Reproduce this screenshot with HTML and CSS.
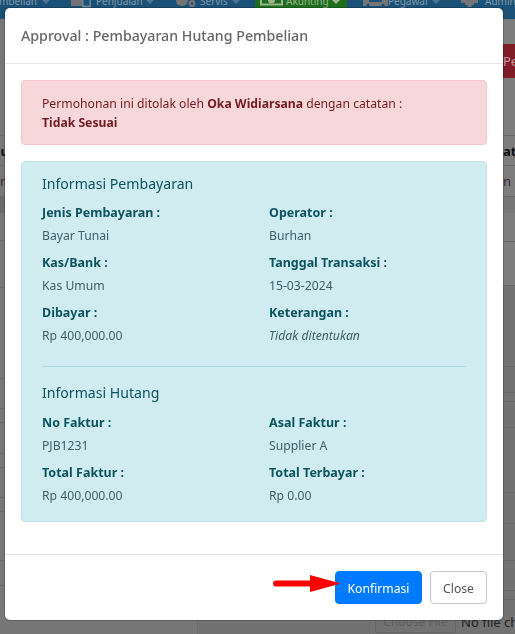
FILE: index.html
```html
<!DOCTYPE html>
<html lang="id">
<head>
<meta charset="utf-8">
<title>Approval</title>
<link rel="stylesheet" href="styles.css">
</head>
<body>
<div class="page">
  <nav class="nav">
    <span class="nav-text w-first">Pembelian</span><span class="caret"></span>
    <svg class="nav-ico i1" width="20" height="19" viewBox="0 0 20 19"><rect width="11" height="6" fill="#737373"/><path d="M11 0h9v7.500h-9z" fill="#6f8699"/><rect x="12.500" y="0" width="6" height="5.500" fill="#1b5177"/></svg>
    <span class="nav-text w45">Penjualan</span><span class="caret"></span>
    <svg class="nav-ico i2" width="22" height="19" viewBox="0 0 22 19"><circle cx="6" cy="0" r="6" fill="#757575"/><circle cx="2" cy="3" r="1.500" fill="#757575"/><circle cx="16" cy="3.500" r="3.500" fill="#757575"/><circle cx="16" cy="3.500" r="1.300" fill="#1b5177"/></svg>
    <span class="nav-text w27">Servis</span><span class="caret"></span>
    <span class="nav-green">
      <svg class="nav-ico" width="23" height="19" viewBox="0 0 23 19"><rect width="23" height="5.500" fill="#9db38f"/><rect x="2" width="19" height="3.500" fill="#1c6e1d"/><circle cx="11.500" cy="0" r="3.500" fill="#9db38f"/></svg>
      <span class="nav-text green-text w41">Akunting</span><span class="caret"></span>
    </span>
    <svg class="nav-ico i3" width="25" height="19" viewBox="0 0 25 19"><rect x="0" width="25" height="6" fill="#757575"/><rect x="6" width="13" height="2" fill="#1b5177"/><circle cx="5" cy="5" r="1.500" fill="#1b5177"/><circle cx="20" cy="5" r="1.500" fill="#1b5177"/></svg>
    <span class="nav-text w39">Pegawai</span><span class="caret"></span>
    <svg class="nav-ico i4" width="17" height="19" viewBox="0 0 17 19"><circle cx="8.500" cy="0" r="6" fill="#757575"/><rect x="6.500" y="0" width="4" height="7" fill="#757575"/><rect x="0" y="0" width="3" height="3" fill="#757575"/><rect x="14" y="0" width="3" height="3" fill="#757575"/></svg>
    <span class="nav-text">Admin</span>
  </nav>
  <div class="backdrop-body">
    <div class="strip strip-left">
      <div class="row r117"></div>
      <div class="row r30 head">Nu</div>
      <div class="row r31 sub">n</div>
      <div class="row r44 band"></div>
      <div class="row r47"></div>
      <div class="row r91"></div>
      <div class="row r30"></div>
      <div class="row r14"></div>
      <div class="row r31"></div>
      <div class="row r14"></div>
      <div class="row r30"></div>
      <div class="row r14"></div>
      <div class="row r49"></div>
      <div class="row r25"></div>
    </div>
    <div class="strip-mid"></div>
    <div class="strip-right">
      <div class="red-btn">Pe</div>
      <div class="row r58"></div>
      <div class="row r30 head">ato</div>
      <div class="row r31 sub">n</div>
      <div class="row r45 band-soft"></div>
      <div class="row r44"></div>
      <div class="row r81 dim"></div>
      <div class="row r26 dim"></div>
      <div class="row r9 dim"></div>
      <div class="row r26 dim"></div>
      <div class="row r65 dim"></div>
      <div class="row r31 dim"></div>
      <div class="row r37 dim"></div>
      <div class="row r30 dim"></div>
      <div class="row r9 dim"></div>
      <div class="file-row">
        <span class="file-btn">Choose File</span>
        <span class="file-text">No file chosen</span>
      </div>
    </div>
  </div>
</div>

<section class="modal">
  <header class="modal-header">
    <h5 class="modal-title">Approval : Pembayaran Hutang Pembelian</h5>
  </header>
  <div class="modal-body">
    <div class="alert">
      <p>Permohonan ini ditolak oleh <b>Oka Widiarsana</b> dengan catatan :</p>
      <p><b>Tidak Sesuai</b></p>
    </div>
    <div class="info">
      <h6 class="info-title">Informasi Pembayaran</h6>
      <div class="grid">
        <div class="field"><b>Jenis Pembayaran :</b><span>Bayar Tunai</span></div>
        <div class="field"><b>Operator :</b><span>Burhan</span></div>
        <div class="field"><b>Kas/Bank :</b><span>Kas Umum</span></div>
        <div class="field"><b>Tanggal Transaksi :</b><span>15-03-2024</span></div>
        <div class="field"><b>Dibayar :</b><span>Rp 400,000.00</span></div>
        <div class="field"><b>Keterangan :</b><span><i>Tidak ditentukan</i></span></div>
      </div>
      <hr class="rule">
      <h6 class="info-title">Informasi Hutang</h6>
      <div class="grid">
        <div class="field"><b>No Faktur :</b><span>PJB1231</span></div>
        <div class="field"><b>Asal Faktur :</b><span>Supplier A</span></div>
        <div class="field"><b>Total Faktur :</b><span>Rp 400,000.00</span></div>
        <div class="field"><b>Total Terbayar :</b><span>Rp 0.00</span></div>
      </div>
    </div>
  </div>
  <footer class="modal-footer">
    <svg class="arrow" width="68" height="18" viewBox="0 0 68 18"><path d="M3 5.500h34V0l31 8.500L37 17v-5.500H3a3 3 0 0 1 0-6z" fill="#fe0000"/></svg>
    <button class="btn btn-primary">Konfirmasi</button>
    <button class="btn btn-light">Close</button>
  </footer>
</section>
</body>
</html>
```

FILE: styles.css
```css
* { box-sizing: border-box; }
html, body { margin: 0; height: 100%; }
body {
  font-family: "Noto Sans", "Open Sans", sans-serif;
  background: #7d7d7d;
  overflow: hidden;
}
.page { width: 515px; height: 634px; overflow: hidden; display: flex; flex-direction: column; }

/* dimmed page behind the modal */
.nav {
  height: 19px;
  flex: none;
  background: #1b5177;
  display: flex;
  align-items: flex-end;
  overflow: hidden;
  color: #8399a9;
  font-size: 10px;
  white-space: nowrap;
}
.nav-text { line-height: 18px; margin-bottom: 9px; flex: none; }
.w-first { width: 37px; display: flex; justify-content: flex-end; }
.w45 { width: 45px; }
.w27 { width: 27px; }
.w41 { width: 41px; }
.w39 { width: 39px; }
.caret { flex: none; width: 8px; height: 4px; margin: 0 0 15px 5px; clip-path: polygon(0 0, 100% 0, 50% 100%); background: #4d7390; }
.nav-ico { flex: none; display: block; }
.i1 { margin: 0 5px 0 21px; }
.i2 { margin: 0 2px 0 22px; }
.i3 { margin: 0 0 0 16px; }
.i4 { margin: 0 7px 0 21px; }
.nav-green { height: 19px; width: 92px; margin-left: 15px; background: #1c6e1d; display: flex; align-items: flex-end; padding-left: 5px; flex: none; }
.nav-green .caret { background: #9db38f; }
.green-text { margin-left: 3px; color: #9db38f; }
.backdrop-body { flex: 1; display: flex; min-height: 0; }
.strip { width: 198px; flex: none; border-right: 1px solid #6c6c6c; background: #777; }
.strip-mid { width: 172px; flex: none; border-right: 1px solid #6c6c6c; background: #727272; }
.strip-right { flex: 1; min-width: 0; overflow: hidden; }
.row { border-bottom: 1px solid #686868; font-size: 13px; line-height: 30px; overflow: hidden; white-space: nowrap; }
.strip-left .head { text-indent: -10px; }
.strip-right .head, .strip-right .sub { padding-left: 133px; }
.head { color: #111; font-weight: 700; }
.sub { color: #3c2340; }
.band { background: linear-gradient(#6b6b6b 16px, transparent 16px); }
.band-soft { background: linear-gradient(#777 16px, transparent 16px); }
.dim { background: #727272; }
.r9 { height: 9px; } .r14 { height: 14px; } .r25 { height: 25px; } .r26 { height: 26px; }
.r30 { height: 30px; } .r31 { height: 31px; } .r37 { height: 37px; } .r44 { height: 44px; }
.r45 { height: 45px; } .r47 { height: 47px; } .r49 { height: 49px; } .r58 { height: 58px; }
.r65 { height: 65px; } .r81 { height: 81px; } .r91 { height: 91px; } .r117 { height: 117px; }
.red-btn { height: 34px; margin: 25px 0 0; background: #7f1d27; color: #c49aa0; font-size: 13px; line-height: 34px; padding-left: 133px; white-space: nowrap; }
.file-row { display: flex; align-items: center; gap: 5px; padding: 9px 0 0 5px; white-space: nowrap; background: #727272; height: 34px; }
.file-btn { flex: none; width: 81px; height: 22px; border: 1px solid #666; border-radius: 2px; color: #5f5f5f; font-size: 12px; text-align: center; line-height: 20px; }
.file-text { color: #222; font-size: 13px; line-height: 22px; }

/* modal */
.modal {
  position: fixed;
  top: 8px;
  left: 5px;
  width: 498px;
  height: 612px;
  background: #fff;
  border-radius: 5px;
  box-shadow: 0 0 0 1px rgba(0, 0, 0, .2);
  display: flex;
  flex-direction: column;
  font-size: 12.200px;
  color: #495057;
}
.modal-header { height: 56px; flex: none; border-bottom: 1px solid #e3e5e8; padding: 18px 16px 0; }
.modal-title { margin: 0; font-size: 14.200px; line-height: 20px; font-weight: 500; color: #666; }
.modal-body { flex: 1; padding: 16px; display: flex; flex-direction: column; gap: 16px; }
.alert {
  height: 65px;
  background: #f8d7da;
  border: 1px solid #f5c6cb;
  border-radius: 4px;
  color: #721c24;
  padding: 13px 20px;
}
.alert p { margin: 0; line-height: 19px; }
.info {
  height: 361px;
  background: #d1ecf1;
  border: 1px solid #bee5eb;
  border-radius: 4px;
  color: #0c5460;
  padding: 12px 20px;
}
.info-title { margin: 0 0 9px; font-size: 14.100px; line-height: 20px; font-weight: 400; color: #0c5460; }
.rule + .info-title { margin-bottom: 10px; }
.grid { display: grid; grid-template-columns: 227px 1fr; row-gap: 7px; }
.field { display: flex; flex-direction: column; }
.field b { font-size: 12.500px; line-height: 20px; color: #0c5460; margin-bottom: 3px; }
.field span { line-height: 20px; color: #3f5f66; }
.rule { border: 0; border-top: 1px solid #abdde5; margin: 20px 0 16px; }
.modal-footer {
  height: 66px;
  flex: none;
  border-top: 1px solid #dee2e6;
  padding: 16px;
  display: flex;
  justify-content: flex-end;
  align-items: flex-start;
  gap: 8px;
  position: relative;
}
.btn { font-family: inherit; font-size: 12.200px; height: 33px; border-radius: 4px; padding: 1px 0 0; }
.btn-primary { width: 87px; background: #007bff; border: 1px solid #007bff; color: #fff; }
.btn-light { width: 57px; background: #fff; border: 1px solid #c9c9c9; color: #555; }
.arrow { position: absolute; left: 268px; top: 20px; z-index: 1; }
```
